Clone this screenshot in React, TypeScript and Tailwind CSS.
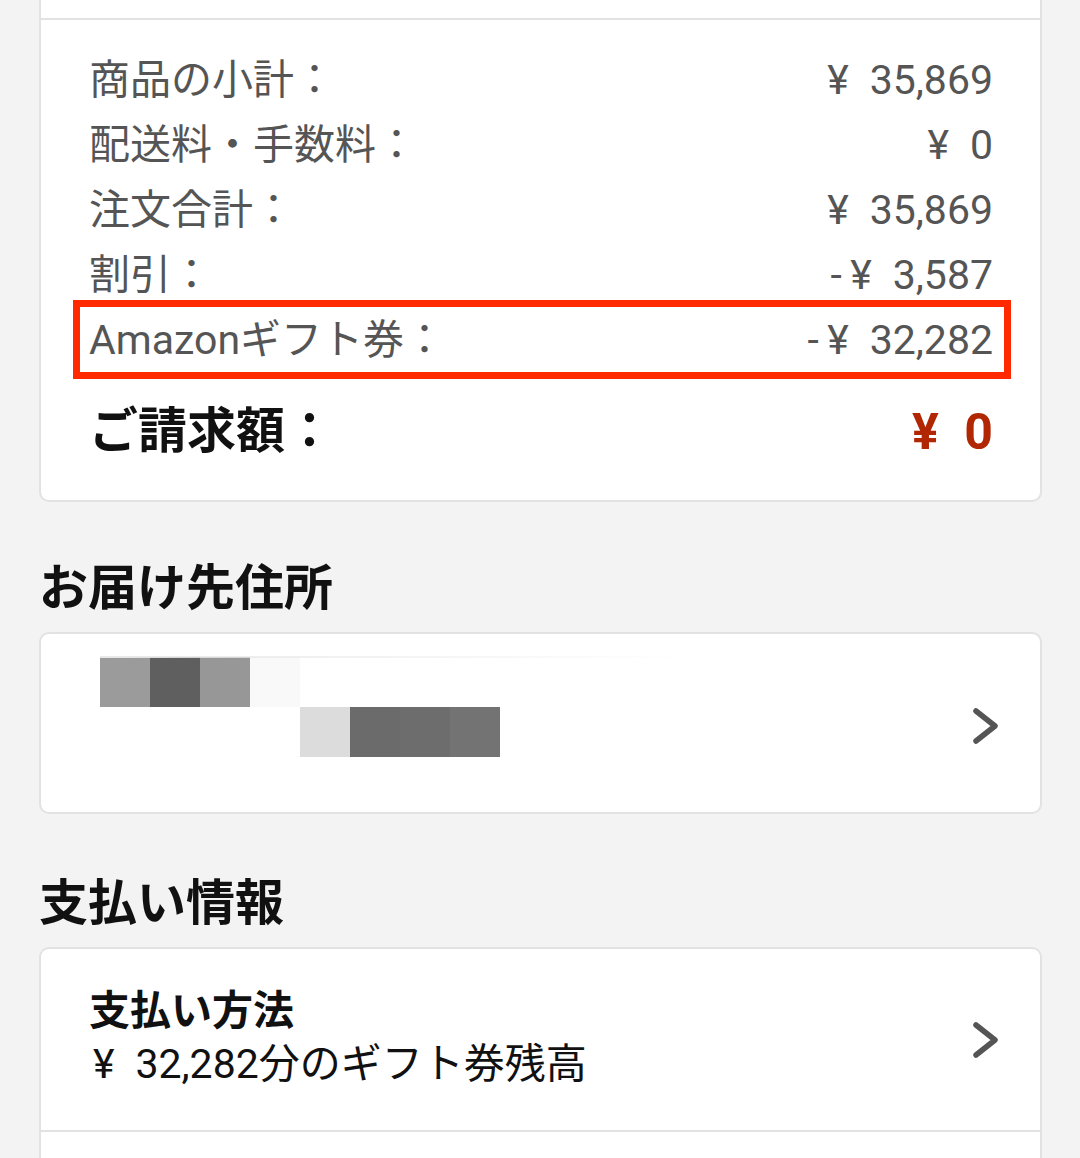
import React from "react";

function Chevron({ className = "" }: { className?: string }) {
  return (
    <svg width="30" height="40" viewBox="0 0 30 40" className={"shrink-0 " + className}>
      <polyline
        points="6,5 25,20 6,35"
        fill="none"
        stroke="#555555"
        strokeWidth="5.5"
        strokeLinecap="round"
        strokeLinejoin="round"
      />
    </svg>
  );
}

function Row({ label, value }: { label: string; value: string }) {
  return (
    <div className="flex justify-between h-[65px] leading-[65px] text-[41px] text-[#555555]">
      <span>{label}</span>
      <span>{value}</span>
    </div>
  );
}

export default function App() {
  return (
    <div className="w-[1080px] h-[1158px] overflow-hidden bg-[#f3f3f3] font-[Roboto,'Noto_Sans_CJK_JP',sans-serif] pl-[39px] pr-[38px]">
      {/* Summary card */}
      <div className="bg-white border-2 border-t-0 border-[#e2e2e2] rounded-b-[10px]">
        <div className="h-[20px] border-b-2 border-[#e2e2e2]" />
        <div className="pl-[48px] pr-[47px] pt-[28px] pb-[33px]">
          <Row label="商品の小計：" value={"¥\u200235,869"} />
          <Row label="配送料・手数料：" value={"¥\u20020"} />
          <Row label="注文合計：" value={"¥\u200235,869"} />
          <Row label="割引：" value={"-\u2009¥\u20023,587"} />
          <div className="relative">
            <Row label="Amazonギフト券：" value={"-\u2009¥\u200232,282"} />
            <div className="absolute left-[-16px] right-[-18px] top-[-8px] bottom-[-6px] border-[7px] border-[#ff2a00]" />
          </div>
          <div className="flex justify-between items-center h-[70px] mt-[24px] font-bold">
            <span className="text-[49px] text-[#111111]">ご請求額：</span>
            <span className="text-[50px] text-[#b12704]">{"¥\u20020"}</span>
          </div>
        </div>
      </div>

      {/* Address */}
      <h2 className="mt-[57px] h-[60px] leading-[60px] text-[49px] font-bold text-[#111111]">
        お届け先住所
      </h2>
      <div className="mt-[13px] h-[182px] bg-white border-2 border-[#e2e2e2] rounded-[10px] flex items-center justify-between pr-[40px]">
        <div className="self-start pt-[23px] pl-[59px] relative">
          <div className="absolute left-[59px] top-[22px] w-[590px] h-[2px] bg-gradient-to-r from-[#e8e8e8] to-transparent" />
          <div className="flex">
            <div className="w-[50px] h-[50px] bg-[#9b9b9b]" />
            <div className="w-[50px] h-[50px] bg-[#5f5f5f]" />
            <div className="w-[50px] h-[50px] bg-[#979797]" />
            <div className="w-[50px] h-[50px] bg-[#f9f9f9]" />
          </div>
          <div className="flex ml-[200px]">
            <div className="w-[50px] h-[50px] bg-[#dcdcdc]" />
            <div className="w-[50px] h-[50px] bg-[#6b6b6b]" />
            <div className="w-[50px] h-[50px] bg-[#6d6d6d]" />
            <div className="w-[50px] h-[50px] bg-[#737373]" />
          </div>
        </div>
        <Chevron className="mt-[6px]" />
      </div>

      {/* Payment */}
      <h2 className="mt-[60px] h-[60px] leading-[60px] text-[49px] font-bold text-[#111111]">
        支払い情報
      </h2>
      <div className="mt-[13px] bg-white border-2 border-b-0 border-[#e2e2e2] rounded-t-[10px]">
        <div className="flex items-center justify-between pr-[40px] pl-[48px] h-[183px] border-b-2 border-[#e2e2e2]">
          <div className="text-[#111111] text-[41px] mb-[4px]">
            <div className="font-bold leading-[53px]">支払い方法</div>
            <div className="leading-[53px] ml-[4px]">{"¥\u200232,282分のギフト券残高"}</div>
          </div>
          <Chevron />
        </div>
        <div className="h-[100px]" />
      </div>
    </div>
  );
}
